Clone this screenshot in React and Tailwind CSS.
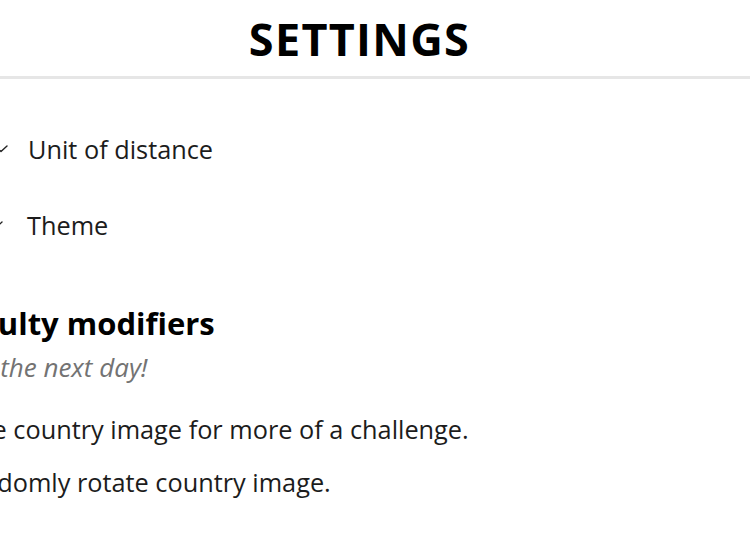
import React from 'react';

function Chevron({ className }) {
    return (
        <svg width="16" height="16" viewBox="0 0 16 16" fill="none" className={className}>
            <path d="M1 5 L7 10.5 L13 5" stroke="#222" strokeWidth="1.4" strokeLinecap="round" strokeLinejoin="round" />
        </svg>
    );
}

function Toggle({ label }) {
    return (
        <label className="flex items-center gap-2 leading-[34px] text-[25.3px] text-[#1c1c1c] whitespace-nowrap">
            <input type="checkbox" className="w-6 h-6" />
            <span>{label}</span>
        </label>
    );
}

export default function App() {
    return (
        <div className="w-[750px] h-[536px] overflow-hidden bg-white" style={{ fontFamily: '"Open Sans", "Noto Sans", sans-serif' }}>
            {/* header */}
            <header className="h-[79px] pt-[16px] pr-[31px] flex justify-center border-b-[3px] border-[#e6e6e6]">
                <h1 className="text-[45px] leading-[45px] font-bold tracking-[1.3px] text-black">SETTINGS</h1>
            </header>

            <div className="-ml-[80px] pt-[53px] flex flex-col">
                <div className="flex items-center h-[34px]">
                    <Chevron className="ml-[74px]" />
                    <span className="ml-[18px] text-[25.3px] leading-[34px] text-[#1c1c1c] whitespace-nowrap">Unit of distance</span>
                </div>
                <div className="flex items-center h-[34px] mt-[42px]">
                    <Chevron className="ml-[69px]" />
                    <span className="ml-[22px] text-[25.3px] leading-[34px] text-[#1c1c1c] whitespace-nowrap">Theme</span>
                </div>

                <h2 className="mt-[61px] -ml-[4px] text-[31px] leading-[40px] font-bold text-black whitespace-nowrap">Difficulty modifiers</h2>
                <p className="mt-[7px] ml-[7px] text-[26px] leading-[34px] italic text-[#737373] whitespace-nowrap">Starts the next day!</p>

                <div className="mt-[28px] flex flex-col gap-[19px]">
                    <Toggle label="Hide country image for more of a challenge." />
                    <Toggle label="Randomly rotate country image." />
                </div>
            </div>
        </div>
    );
}
